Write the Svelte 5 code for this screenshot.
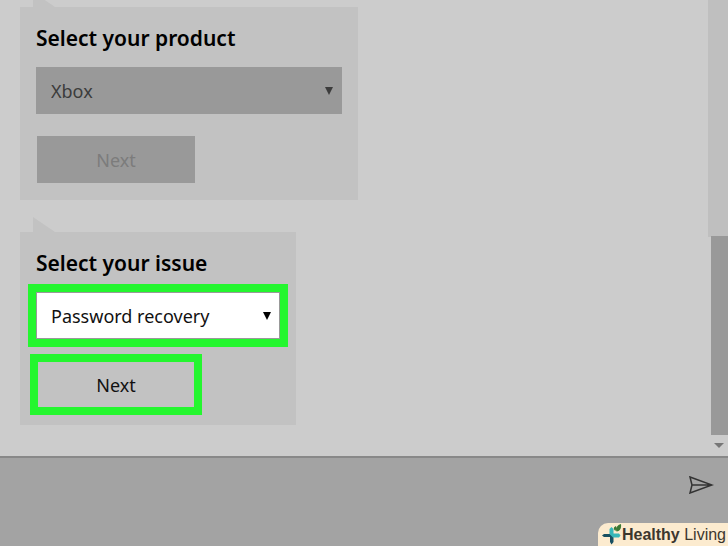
<script lang="ts">
	type Step = {
		id: string;
		title: string;
		options: string[];
		answered: boolean;
	};

	const steps: Step[] = [
		{ id: 'product', title: 'Select your product', options: ['Xbox'], answered: true },
		{ id: 'issue', title: 'Select your issue', options: ['Password recovery'], answered: false }
	];

	let choices = $state<Record<string, string>>({
		product: 'Xbox',
		issue: 'Password recovery'
	});
</script>

<div class="chat">
	<div class="history">
		<main class="messages">
			{#each steps as step (step.id)}
				<form class="card" onsubmit={(e) => e.preventDefault()}>
					<svg class="tail" viewBox="0 0 22 15" aria-hidden="true"><path d="M0 0L22 15H0Z" /></svg>
					<label for={step.id}>{step.title}</label>
					<div class="field {step.id}">
						<select id={step.id} bind:value={choices[step.id]} disabled={step.answered}>
							{#each step.options as option}
								<option>{option}</option>
							{/each}
						</select>
						<svg class="caret" viewBox="0 0 8 8" aria-hidden="true"><path d="M0 0H8L4 8Z" /></svg>
					</div>
					<button type="submit" class="next" disabled={step.answered}>Next</button>
				</form>
			{/each}
		</main>
		<div class="scrollbar" aria-hidden="true">
			<div class="thumb"></div>
			<svg class="down" viewBox="0 0 10 5"><path d="M0 0H10L5 5Z" /></svg>
		</div>
	</div>

	<footer class="composer">
		<button type="button" class="send" aria-label="Send">
			<svg viewBox="0 0 26 18"><path d="M2 1L24 9L2 17L4 9ZM4 9H24" /></svg>
		</button>
		<div class="brand">
			<svg viewBox="0 0 20 22" aria-hidden="true">
				<path class="navy" d="M8 10H2L0 11.500L2 13H8V18L9.500 20.500L11.500 18V11Z" />
				<path class="teal" d="M7.500 5L9.500 3L11.500 5V9.500H17L18.500 11.500L17 13.500H11L7.500 10Z" />
				<path class="leaf" d="M14.500 7.500C13 4 15.500 1 19 0C19.500 4 18.500 7 14.500 7.500ZM13.500 7C11 5 11.500 3 14 2C14.500 4 14 5 13.500 7Z" />
			</svg>
			<span><b>Healthy</b> Living</span>
		</div>
	</footer>
</div>

<style>
	:global(body) {
		margin: 0;
		background: #ccc;
	}

	.chat {
		display: flex;
		flex-direction: column;
		min-height: 100vh;
		font-family: 'Segoe UI', 'Noto Sans', sans-serif;
		font-size: 18px;
		color: #111;
		background: #ccc;
	}

	.history {
		display: flex;
		flex: 1;
	}

	.messages {
		display: flex;
		flex: 1;
		flex-direction: column;
		align-items: flex-start;
		gap: 32px;
		padding: 7px 20px 31px;
	}

	.card {
		position: relative;
		display: flex;
		flex-direction: column;
		align-items: flex-start;
		padding: 16px 16px 17px;
		background: #c2c2c2;
	}

	.tail {
		position: absolute;
		left: 13px;
		bottom: 100%;
		width: 22px;
		height: 15px;
		fill: #c2c2c2;
	}

	label {
		margin-bottom: 14px;
		font-size: 21px;
		font-weight: 600;
		line-height: 30px;
		color: #000;
	}

	.field {
		position: relative;
		width: 306px;
	}

	.field.issue {
		width: 244px;
	}

	select {
		display: block;
		box-sizing: border-box;
		width: 100%;
		height: 47px;
		margin: 0;
		padding: 0 14px;
		border: 1px solid #999;
		border-radius: 0;
		appearance: none;
		background: #fff;
		color: #111;
		font: inherit;
	}

	select:enabled,
	.next:enabled {
		outline: 8px solid #24f62f;
	}

	select:disabled {
		background: #999;
		color: #3c3c3c;
		opacity: 1;
	}

	.caret {
		position: absolute;
		top: 20px;
		right: 9px;
		width: 8px;
		height: 8px;
		pointer-events: none;
	}

	.product .caret {
		fill: #3c3c3c;
	}

	.next {
		width: 158px;
		height: 47px;
		margin: 22px 0 0 1px;
		padding: 0;
		border: 0;
		background: #c2c2c2;
		color: #111;
		font: inherit;
	}

	.next:enabled {
		outline-offset: -1px;
	}

	.next:disabled {
		background: #999;
		color: #7c7c7c;
	}

	.scrollbar {
		display: flex;
		flex-direction: column;
		align-items: flex-end;
		justify-content: flex-end;
		width: 20px;
		background: linear-gradient(to top, #ccc 48%, #bfbfbf 48%);
	}

	.thumb {
		width: 17px;
		height: 199px;
		background: #999;
	}

	.down {
		width: 10px;
		height: 5px;
		margin: 8px 4px;
		fill: #777;
	}

	.composer {
		display: flex;
		flex-direction: column;
		align-items: flex-end;
		justify-content: space-between;
		box-sizing: border-box;
		height: 90px;
		padding-top: 18px;
		border-top: 2px solid #888;
		background: #a3a3a3;
	}

	.send {
		margin-right: 14px;
		padding: 0;
		border: 0;
		background: none;
	}

	.send svg {
		display: block;
		width: 26px;
		height: 18px;
		fill: none;
		stroke: #333;
		stroke-width: 1.5;
	}

	.brand {
		display: flex;
		align-items: center;
		height: 23px;
		padding: 0 2px 0 4px;
		border-radius: 10px 0 0 0;
		background: #fcebcf;
		color: #3c372e;
		font-family: 'Liberation Sans', Arial, sans-serif;
		font-size: 16px;
		line-height: 23px;
		white-space: nowrap;
	}

	.brand svg {
		width: 20px;
		height: 22px;
	}

	.teal {
		fill: #36b7b9;
	}

	.navy {
		fill: #174f61;
	}

	.leaf {
		fill: #3c7934;
	}
</style>
